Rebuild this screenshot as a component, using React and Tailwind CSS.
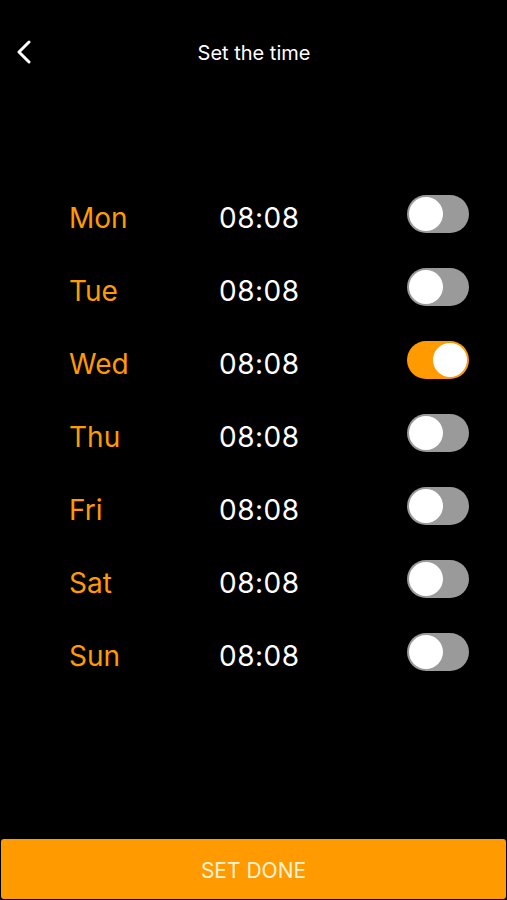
import React, { useState } from "react";

const days = ["Mon", "Tue", "Wed", "Thu", "Fri", "Sat", "Sun"];

function Toggle({ on, onClick }) {
  return (
    <button
      onClick={onClick}
      className={`relative w-[62px] h-[38px] rounded-full ${on ? "bg-[#ff9a00]" : "bg-[#9a9a9a]"} -translate-y-[4px]`}
    >
      <span
        className={`absolute top-[2px] w-[34px] h-[34px] rounded-full bg-white ${on ? "left-[26px]" : "left-[2px]"}`}
      />
    </button>
  );
}

export default function App() {
  const [state, setState] = useState([false, false, true, false, false, false, false]);
  return (
    <div
      className="w-[507px] h-[900px] bg-black flex flex-col text-white"
      style={{ fontFamily: "Inter, 'Noto Sans', sans-serif" }}
    >
      <div className="relative h-[104px] flex items-start">
        <div className="absolute left-[16px] top-[40px]">
          <svg width="16" height="24" viewBox="0 0 16 24" fill="none">
            <path d="M13 2 L3 12 L13 22" stroke="white" strokeWidth="3" strokeLinecap="round" strokeLinejoin="round" />
          </svg>
        </div>
        <div className="w-full text-center text-[20px] leading-[24px] mt-[41px] pl-[1px]">Set the time</div>
      </div>
      <div className="flex flex-col mt-[77px] pl-[69px] pr-[38px]">
        {days.map((d, i) => (
          <div key={d} className="flex items-center h-[73px]">
            <div className="w-[150px] text-[28px] text-[#ff9a00]">{d}</div>
            <div className="text-[28px] tracking-[0.5px]">08:08</div>
            <div className="ml-auto flex">
              <Toggle
                on={state[i]}
                onClick={() => setState(state.map((v, j) => (j === i ? !v : v)))}
              />
            </div>
          </div>
        ))}
      </div>
      <div className="mt-auto px-[1px] pb-[1px]">
        <button className="w-full h-[60px] rounded-[3px] bg-[#ff9a00] text-[#fff3d6] text-[21px] flex items-center justify-center pt-[3px]">
          SET DONE
        </button>
      </div>
    </div>
  );
}
